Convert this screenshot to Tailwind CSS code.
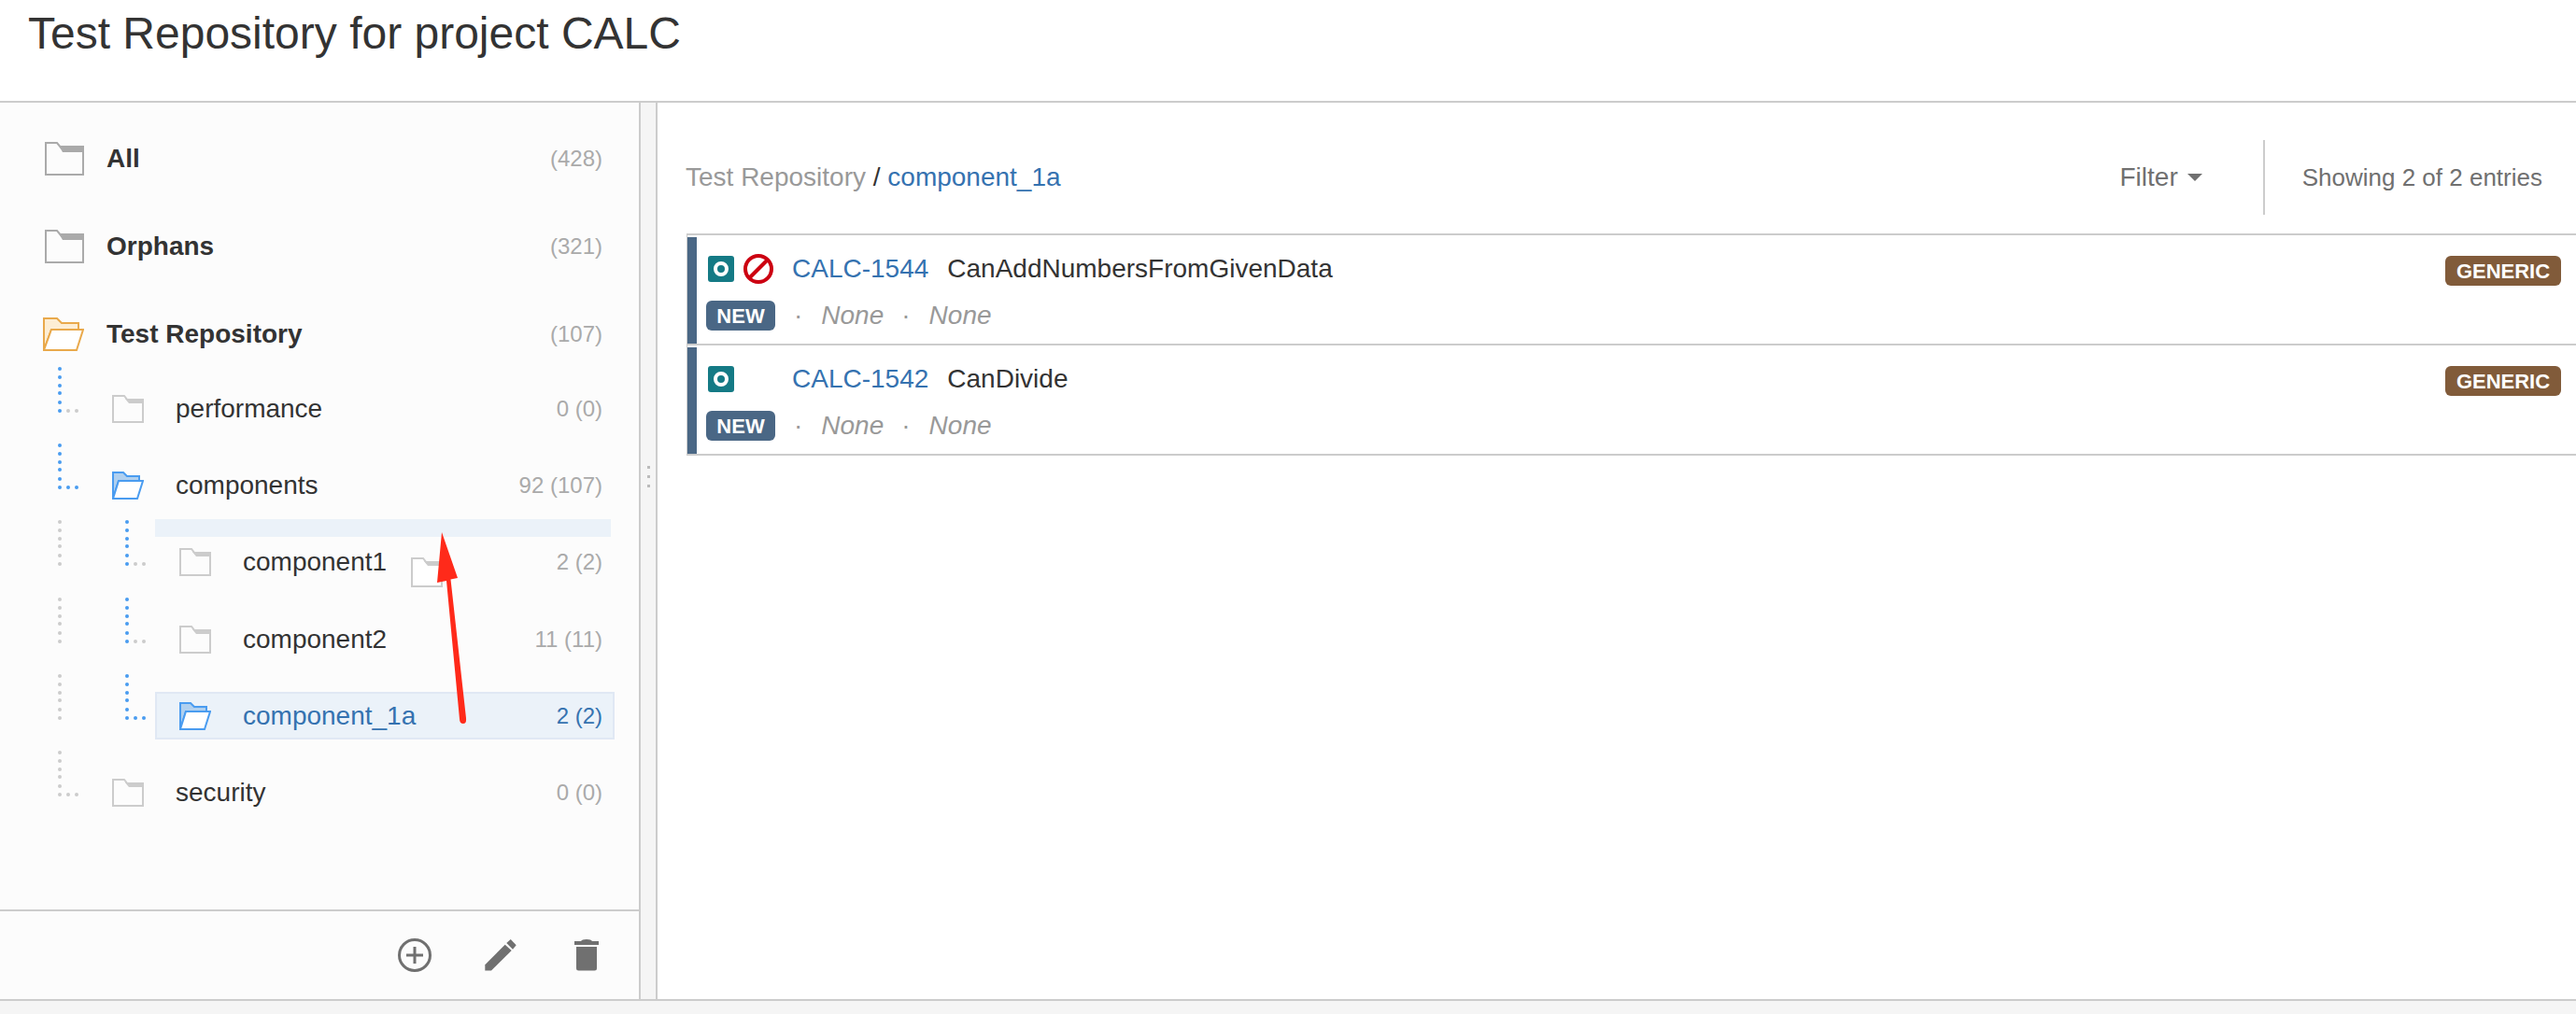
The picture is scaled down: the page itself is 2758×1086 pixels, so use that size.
<!DOCTYPE html>
<html lang="en">
<head>
  <meta charset="UTF-8" />
  <title>Test Repository for project CALC</title>
  <script src="https://cdn.jsdelivr.net/npm/@tailwindcss/browser@4"></script>
</head>
<body class="m-0 font-['Liberation_Sans',Arial,sans-serif]">
<div class="relative flex h-[1086px] w-[2758px] flex-col overflow-hidden bg-[#f5f5f5] text-[28px] text-[#333]">

  <!-- PAGE HEADER -->
  <header class="h-[110px] shrink-0 border-b-2 border-[#ccc] bg-white pl-[30px] pt-[12px]">
    <h1 class="text-[48px] leading-[48px] font-normal">Test Repository for project CALC</h1>
  </header>

  <div class="flex h-[960px] shrink-0 border-b-2 border-[#ccc] box-content">
    <!-- LEFT TREE -->
    <aside class="relative flex w-[686px] shrink-0 flex-col border-r-2 border-[#ccc] bg-[#fcfcfc]">
      <div class="h-[864px] pt-[21px]">
        <div class="mb-[16px] flex h-[78px] items-center pl-[48px] pr-[39px]">
          <svg class="mr-[24px] h-[36px] w-[42px]" viewBox="0 0 42 36"><path d="M1 1H13L18 7H41V35H1Z" fill="none" stroke="#aaa" stroke-width="2"/><path d="M15 4H42V11H19Z" fill="#aaa"/></svg>
          <span class="font-bold">All</span>
          <span class="ml-auto text-[#aaa] text-[24px]">(428)</span>
        </div>
        <div class="mb-[16px] flex h-[78px] items-center pl-[48px] pr-[39px]">
          <svg class="mr-[24px] h-[36px] w-[42px]" viewBox="0 0 42 36"><path d="M1 1H13L18 7H41V35H1Z" fill="none" stroke="#aaa" stroke-width="2"/><path d="M15 4H42V11H19Z" fill="#aaa"/></svg>
          <span class="font-bold">Orphans</span>
          <span class="ml-auto text-[#aaa] text-[24px]">(321)</span>
        </div>
        <div class="flex h-[78px] items-center pl-[46px] pr-[39px]">
          <svg class="mr-[24px] h-[36px] w-[44px]" viewBox="0 0 44 36"><path d="M1 35V1H15L20 6H38V13H9Z" fill="#fdeed4" stroke="#e9a94b" stroke-width="2"/><path d="M1 35L9 13H43L36 35Z" fill="#fff" stroke="#e9a94b" stroke-width="2"/></svg>
          <span class="font-bold">Test Repository</span>
          <span class="ml-auto text-[#aaa] text-[24px]">(107)</span>
        </div>

        <!-- tree rows -->
        <div class="flex h-[82.2px] items-center pl-[60px] pr-[26px]">
          <svg class="-mt-[4px] h-[50px] w-[28px] shrink-0 self-start" viewBox="0 0 28 50"><g fill="#4a9cf0"><circle cx="4" cy="2" r="2"/><circle cx="4" cy="11" r="2"/><circle cx="4" cy="20" r="2"/><circle cx="4" cy="28" r="2"/><circle cx="4" cy="38" r="2"/><circle cx="4" cy="47" r="2"/></g><g fill="#ccc"><circle cx="13" cy="47" r="2"/><circle cx="22" cy="47" r="2"/></g></svg>
          <div class="ml-[6px] flex h-[51px] flex-1 items-center pl-[26px] pr-[13px]">
            <svg class="mr-[34px] h-[30px] w-[34px]" viewBox="0 0 34 30"><path d="M1 29V1H13L17 6H33V29Z" fill="none" stroke="#ccc" stroke-width="2"/><path d="M14 4H34V9H18Z" fill="#ccc"/></svg>
            <span>performance</span>
            <span class="ml-auto text-[#aaa] text-[24px]">0 (0)</span>
          </div>
        </div>
        <div class="flex h-[82.2px] items-center pl-[60px] pr-[26px]">
          <svg class="-mt-[4px] h-[50px] w-[28px] shrink-0 self-start" viewBox="0 0 28 50"><g fill="#4a9cf0"><circle cx="4" cy="2" r="2"/><circle cx="4" cy="11" r="2"/><circle cx="4" cy="20" r="2"/><circle cx="4" cy="28" r="2"/><circle cx="4" cy="38" r="2"/><circle cx="4" cy="47" r="2"/><circle cx="13" cy="47" r="2"/><circle cx="22" cy="47" r="2"/></g></svg>
          <div class="ml-[6px] flex h-[51px] flex-1 items-center pl-[26px] pr-[13px]">
            <svg class="mr-[34px] h-[30px] w-[34px]" viewBox="0 0 34 30"><path d="M1 29V1H12L16 5H29V10H7Z" fill="#b0d0ef" stroke="#4a9cf0" stroke-width="2"/><path d="M1 29L7 10H33L27 29Z" fill="#fff" stroke="#4a9cf0" stroke-width="2"/></svg>
            <span>components</span>
            <span class="ml-auto text-[#aaa] text-[24px]">92 (107)</span>
          </div>
        </div>
        <div class="flex h-[82.2px] items-center pl-[60px] pr-[26px]">
          <svg class="-mt-[4px] h-[50px] w-[72px] shrink-0 self-start" viewBox="0 0 72 50"><g fill="#ccc"><circle cx="4" cy="2" r="2"/><circle cx="4" cy="11" r="2"/><circle cx="4" cy="20" r="2"/><circle cx="4" cy="28" r="2"/><circle cx="4" cy="38" r="2"/><circle cx="4" cy="47" r="2"/></g></svg>
          <svg class="-mt-[4px] h-[50px] w-[28px] shrink-0 self-start" viewBox="0 0 28 50"><g fill="#4a9cf0"><circle cx="4" cy="2" r="2"/><circle cx="4" cy="11" r="2"/><circle cx="4" cy="20" r="2"/><circle cx="4" cy="28" r="2"/><circle cx="4" cy="38" r="2"/><circle cx="4" cy="47" r="2"/></g><g fill="#ccc"><circle cx="13" cy="47" r="2"/><circle cx="22" cy="47" r="2"/></g></svg>
          <div class="ml-[6px] flex h-[51px] flex-1 items-center pl-[26px] pr-[13px]">
            <svg class="mr-[34px] h-[30px] w-[34px]" viewBox="0 0 34 30"><path d="M1 29V1H13L17 6H33V29Z" fill="none" stroke="#ccc" stroke-width="2"/><path d="M14 4H34V9H18Z" fill="#ccc"/></svg>
            <span>component1</span>
            <span class="ml-auto text-[#aaa] text-[24px]">2 (2)</span>
          </div>
        </div>
        <div class="flex h-[82.2px] items-center pl-[60px] pr-[26px]">
          <svg class="-mt-[4px] h-[50px] w-[72px] shrink-0 self-start" viewBox="0 0 72 50"><g fill="#ccc"><circle cx="4" cy="2" r="2"/><circle cx="4" cy="11" r="2"/><circle cx="4" cy="20" r="2"/><circle cx="4" cy="28" r="2"/><circle cx="4" cy="38" r="2"/><circle cx="4" cy="47" r="2"/></g></svg>
          <svg class="-mt-[4px] h-[50px] w-[28px] shrink-0 self-start" viewBox="0 0 28 50"><g fill="#4a9cf0"><circle cx="4" cy="2" r="2"/><circle cx="4" cy="11" r="2"/><circle cx="4" cy="20" r="2"/><circle cx="4" cy="28" r="2"/><circle cx="4" cy="38" r="2"/><circle cx="4" cy="47" r="2"/></g><g fill="#ccc"><circle cx="13" cy="47" r="2"/><circle cx="22" cy="47" r="2"/></g></svg>
          <div class="ml-[6px] flex h-[51px] flex-1 items-center pl-[26px] pr-[13px]">
            <svg class="mr-[34px] h-[30px] w-[34px]" viewBox="0 0 34 30"><path d="M1 29V1H13L17 6H33V29Z" fill="none" stroke="#ccc" stroke-width="2"/><path d="M14 4H34V9H18Z" fill="#ccc"/></svg>
            <span>component2</span>
            <span class="ml-auto text-[#aaa] text-[24px]">11 (11)</span>
          </div>
        </div>
        <div class="flex h-[82.2px] items-center pl-[60px] pr-[26px]">
          <svg class="-mt-[4px] h-[50px] w-[72px] shrink-0 self-start" viewBox="0 0 72 50"><g fill="#ccc"><circle cx="4" cy="2" r="2"/><circle cx="4" cy="11" r="2"/><circle cx="4" cy="20" r="2"/><circle cx="4" cy="28" r="2"/><circle cx="4" cy="38" r="2"/><circle cx="4" cy="47" r="2"/></g></svg>
          <svg class="-mt-[4px] h-[50px] w-[28px] shrink-0 self-start" viewBox="0 0 28 50"><g fill="#4a9cf0"><circle cx="4" cy="2" r="2"/><circle cx="4" cy="11" r="2"/><circle cx="4" cy="20" r="2"/><circle cx="4" cy="28" r="2"/><circle cx="4" cy="38" r="2"/><circle cx="4" cy="47" r="2"/><circle cx="13" cy="47" r="2"/><circle cx="22" cy="47" r="2"/></g></svg>
          <div class="ml-[6px] flex h-[51px] flex-1 items-center border-2 border-[#e0e8f4] bg-[#ebf2f9] pl-[24px] pr-[11px] text-[#3572b0]">
            <svg class="mr-[34px] h-[30px] w-[34px]" viewBox="0 0 34 30"><path d="M1 29V1H12L16 5H29V10H7Z" fill="#b0d0ef" stroke="#4a9cf0" stroke-width="2"/><path d="M1 29L7 10H33L27 29Z" fill="#fff" stroke="#4a9cf0" stroke-width="2"/></svg>
            <span>component_1a</span>
            <span class="ml-auto text-[24px]">2 (2)</span>
          </div>
        </div>
        <div class="flex h-[82.2px] items-center pl-[60px] pr-[26px]">
          <svg class="-mt-[4px] h-[50px] w-[28px] shrink-0 self-start" viewBox="0 0 28 50"><g fill="#ccc"><circle cx="4" cy="2" r="2"/><circle cx="4" cy="11" r="2"/><circle cx="4" cy="20" r="2"/><circle cx="4" cy="28" r="2"/><circle cx="4" cy="38" r="2"/><circle cx="4" cy="47" r="2"/><circle cx="13" cy="47" r="2"/><circle cx="22" cy="47" r="2"/></g></svg>
          <div class="ml-[6px] flex h-[51px] flex-1 items-center pl-[26px] pr-[13px]">
            <svg class="mr-[34px] h-[30px] w-[34px]" viewBox="0 0 34 30"><path d="M1 29V1H13L17 6H33V29Z" fill="none" stroke="#ccc" stroke-width="2"/><path d="M14 4H34V9H18Z" fill="#ccc"/></svg>
            <span>security</span>
            <span class="ml-auto text-[#aaa] text-[24px]">0 (0)</span>
          </div>
        </div>
      </div>

      <!-- toolbar -->
      <div class="flex h-[96px] items-center justify-end border-t-2 border-[#ccc] pr-[43px]">
        <svg class="h-[36px] w-[36px]" viewBox="0 0 36 36"><circle cx="18" cy="18" r="16.5" fill="none" stroke="#707070" stroke-width="3"/><path d="M18 9V27M9 18H27" stroke="#707070" stroke-width="3"/></svg>
        <svg class="ml-[57px] h-[34px] w-[34px]" viewBox="0 0 34 34"><path d="M0.3 27.3L21.7 5.7L28.7 12L7 33.5H0.3Z" fill="#707070"/><path d="M27.7 0L33.7 6.3L30 10.7L23.3 4Z" fill="#707070"/></svg>
        <svg class="ml-[62px] h-[34px] w-[26px]" viewBox="0 0 26 34"><path d="M0 2H7Q8 0 13 0Q18 0 19 2H26V6H0Z" fill="#707070"/><path d="M2 8H24V31Q24 33.5 21.5 33.5H4.5Q2 33.5 2 31Z" fill="#707070"/></svg>
      </div>

      <!-- drop target line while dragging -->
      <div class="absolute left-[166px] top-[446px] h-[19px] w-[488px] bg-[#ebf2f9]"></div>
      <!-- dragged folder ghost -->
      <svg class="absolute left-[440px] top-[487px] h-[32px] w-[34px]" viewBox="0 0 34 32"><path d="M1 31V1H13L17 6H33V31Z" fill="#fff" stroke="#ccc" stroke-width="2"/><path d="M14 4H34V9H18Z" fill="#ccc"/></svg>
    </aside>

    <!-- SPLITTER -->
    <div class="flex w-[16px] shrink-0 flex-col items-center justify-center gap-[7px] pb-[160px]">
      <span class="h-[3px] w-[3px] bg-[#bbb]"></span>
      <span class="h-[3px] w-[3px] bg-[#bbb]"></span>
      <span class="h-[3px] w-[3px] bg-[#bbb]"></span>
    </div>

    <!-- MAIN -->
    <main class="flex-1 border-l-2 border-[#ccc] bg-white pl-[30px]">
      <div class="flex h-[140px] items-center pr-[36px] pt-[20px]">
        <div><span class="text-[#999]">Test Repository</span> / <a class="text-[#3572b0]">component_1a</a></div>
        <div class="ml-auto flex h-[80px] items-center text-[#707070]">
          <span>Filter</span>
          <svg class="ml-[10px] h-[8px] w-[16px]" viewBox="0 0 16 8"><path d="M0 0H16L8 8Z" fill="#707070"/></svg>
          <div class="ml-[65px] h-[80px] w-[2px] bg-[#ccc]"></div>
          <span class="ml-[40px] text-[26px]">Showing 2 of 2 entries</span>
        </div>
      </div>

      <div class="ml-px border-l border-t-2 border-[#ccc]">
        <div class="flex h-[118px] border-b-2 border-[#ccc]">
          <div class="mt-[2px] w-[10px] shrink-0 bg-[#4a6785]"></div>
          <div class="flex-1 pl-[10px] pr-[16px] pt-[20px]">
            <div class="flex h-[32px] items-center">
              <svg class="ml-[2px] h-[28px] w-[28px]" viewBox="0 0 28 28"><rect width="28" height="28" rx="3" fill="#147a85"/><circle cx="14" cy="14" r="6" fill="none" stroke="#fff" stroke-width="4"/></svg>
              <svg class="ml-[10px] h-[32px] w-[32px]" viewBox="0 0 32 32"><circle cx="16" cy="16" r="14" fill="none" stroke="#cc0011" stroke-width="4"/><path d="M6 26L26 6" stroke="#cc0011" stroke-width="4"/></svg>
              <a class="ml-[20px] text-[#3572b0]">CALC-1544</a>
              <span class="ml-[20px]">CanAddNumbersFromGivenData</span>
              <span class="ml-auto mt-[4px] flex h-[32px] w-[124px] items-center justify-center rounded-[6px] bg-[#815b3a] text-[22px] font-bold text-white">GENERIC</span>
            </div>
            <div class="mt-[18px] flex h-[32px] items-center italic text-[#999]">
              <span class="flex h-[32px] w-[74px] items-center justify-center rounded-[6px] bg-[#4a6785] text-[22px] font-bold not-italic text-white">NEW</span>
              <span class="ml-[20px] not-italic">·</span>
              <span class="ml-[20px]">None</span>
              <span class="ml-[19px] not-italic">·</span>
              <span class="ml-[20px]">None</span>
            </div>
          </div>
        </div>
        <div class="flex h-[118px] border-b-2 border-[#ccc]">
          <div class="mt-[2px] w-[10px] shrink-0 bg-[#4a6785]"></div>
          <div class="flex-1 pl-[10px] pr-[16px] pt-[20px]">
            <div class="flex h-[32px] items-center">
              <svg class="ml-[2px] h-[28px] w-[28px]" viewBox="0 0 28 28"><rect width="28" height="28" rx="3" fill="#147a85"/><circle cx="14" cy="14" r="6" fill="none" stroke="#fff" stroke-width="4"/></svg>
              <span class="ml-[10px] w-[32px]"></span>
              <a class="ml-[20px] text-[#3572b0]">CALC-1542</a>
              <span class="ml-[20px]">CanDivide</span>
              <span class="ml-auto mt-[4px] flex h-[32px] w-[124px] items-center justify-center rounded-[6px] bg-[#815b3a] text-[22px] font-bold text-white">GENERIC</span>
            </div>
            <div class="mt-[18px] flex h-[32px] items-center italic text-[#999]">
              <span class="flex h-[32px] w-[74px] items-center justify-center rounded-[6px] bg-[#4a6785] text-[22px] font-bold not-italic text-white">NEW</span>
              <span class="ml-[20px] not-italic">·</span>
              <span class="ml-[20px]">None</span>
              <span class="ml-[19px] not-italic">·</span>
              <span class="ml-[20px]">None</span>
            </div>
          </div>
        </div>
      </div>
    </main>
  </div>

  <!-- red annotation arrow drawn over the screenshot -->
  <svg class="absolute left-[460px] top-[560px] h-[220px] w-[40px]" viewBox="460 560 40 220"><path d="M473 570L490 619L482.5 620.5L499 769Q499.500 775 496 775Q492 775 492 770L478 622L468 624Z" fill="#ff2a1a"/></svg>
</div>
</body>
</html>
